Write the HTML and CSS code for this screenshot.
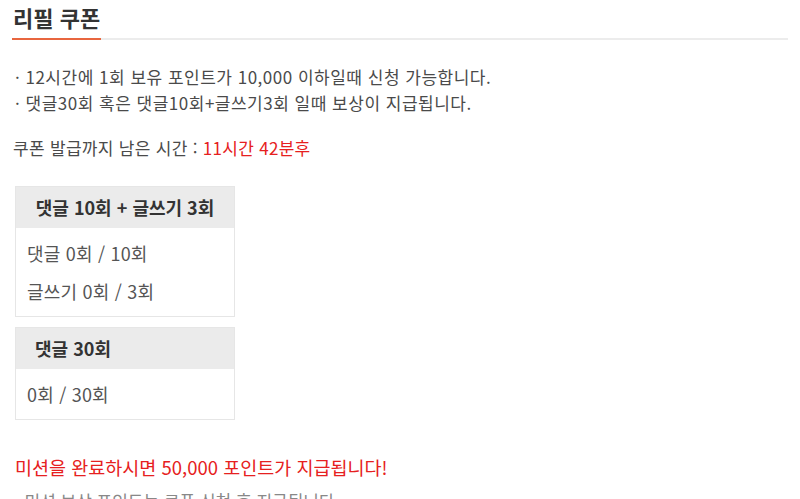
FILE: index.html
```html
<!DOCTYPE html>
<html lang="ko">
<head>
<meta charset="utf-8">
<link rel="stylesheet" href="styles.css">
</head>
<body>
<div class="page">
  <div class="title-wrap">
    <h2 class="title">리필 쿠폰</h2>
  </div>
  <ul class="notes">
    <li>· 12시간에 1회 보유 포인트가 10,000 이하일때 신청 가능합니다.</li>
    <li>· 댓글30회 혹은 댓글10회+글쓰기3회 일때 보상이 지급됩니다.</li>
  </ul>
  <p class="remain">쿠폰 발급까지 남은 시간 : <span class="red">11시간 42분후</span></p>
  <div class="box">
    <div class="box-head center">댓글 10회 + 글쓰기 3회</div>
    <div class="box-body">
      <div class="row">댓글 0회 / 10회</div>
      <div class="row">글쓰기 0회 / 3회</div>
    </div>
  </div>
  <div class="box">
    <div class="box-head left">댓글 30회</div>
    <div class="box-body">
      <div class="row">0회 / 30회</div>
    </div>
  </div>
  <p class="mission">미션을 완료하시면 50,000 포인트가 지급됩니다!</p>
  <p class="more">· 미션 보상 포인트는 쿠폰 신청 후 지급됩니다.</p>
</div>
</body>
</html>
```

FILE: styles.css
```css
html, body {
  margin: 0;
  padding: 0;
  background: #fff;
}
body {
  font-family: "Noto Sans CJK KR", "Noto Sans", sans-serif;
  color: #333;
}
.page {
  padding: 0 12px;
}
.title-wrap {
  border-bottom: 2px solid #ececec;
  width: 776px;
  height: 38px;
}
.title {
  display: block;
  box-sizing: border-box;
  margin: 0;
  padding: 2px 0 0 1px;
  height: 40px;
  width: 89px;
  font-size: 22px;
  font-weight: 700;
  color: #333;
  line-height: 30px;
  border-bottom: 2px solid #e8663f;
  white-space: nowrap;
}
.notes {
  list-style: none;
  margin: 24px 0 0 3px;
  padding: 0;
  font-size: 17px;
  letter-spacing: 0.5px;
  line-height: 26px;
  color: #4a4a4a;
}
.remain {
  margin: 19px 0 0 1px;
  font-size: 17px;
  letter-spacing: 0.3px;
  line-height: 26px;
  color: #4a4a4a;
}
.red {
  color: #e62020;
}
.box {
  margin: 25px 0 0 3px;
  width: 218px;
  border: 1px solid #e6e6e6;
}
.box + .box {
  margin-top: 10px;
}
.box-head {
  background: #ebebeb;
  font-size: 18px;
  font-weight: 700;
  line-height: 41px;
  color: #333;
  white-space: nowrap;
}
.box-head.center {
  text-align: center;
}
.box-head.left {
  padding-left: 19px;
}
.box-body {
  padding: 6px 11px 6px;
  font-size: 18px;
  letter-spacing: 0.2px;
  color: #555;
}
.row {
  line-height: 38px;
}
.mission {
  margin: 34px 0 0 3px;
  font-size: 18.5px;
  line-height: 26px;
  color: #e62020;
}
.more {
  margin: 8px 0 0 3px;
  font-size: 17px;
  line-height: 26px;
  color: #888;
}
```
